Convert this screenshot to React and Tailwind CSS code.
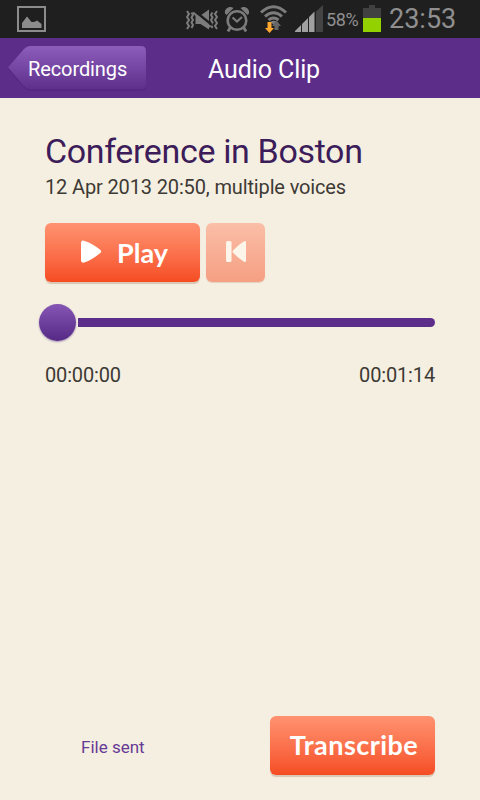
import React from 'react';

const PictureIcon = () => (
    <svg className="w-[29px] h-[26px]" viewBox="0 0 29 26" fill="none">
        <rect x="1" y="1" width="27" height="24" stroke="#8c8c8c" strokeWidth="2" />
        <path d="M5 22v-5l5-6.500 4.500 5.500q3 .5 5.500-1.500l4.500 3.500v4z" fill="#8c8c8c" />
    </svg>
);

const VibrateMuteIcon = () => (
    <svg className="w-8 h-6" viewBox="0 0 32 24" fill="none">
        <path d="M1 3l2 3-2 3 2 3-2 3 2 3-2 3M5.500 4.500l1.500 2.500-1.500 2.500L7 12l-1.500 2.500L7 17l-1.500 3M31 3l-2 3 2 3-2 3 2 3-2 3 2 3M26.500 4.500L25 7l1.500 2.500L25 12l1.500 2.500L25 17l1.500 3" stroke="#7c7c7c" strokeWidth="2" />
        <path d="M9.500 7.500h5l8.500-6v20L14.500 16h-5z" fill="#7c7c7c" />
        <path d="M8 2.500L26 17" stroke="#1f1f1f" strokeWidth="2.500" />
        <path d="M7 4.500l17.500 14.500" stroke="#7c7c7c" strokeWidth="2.200" />
    </svg>
);

const AlarmIcon = () => (
    <svg className="w-[26px] h-[26px]" viewBox="0 0 26 26" fill="none" stroke="#7c7c7c">
        <circle cx="13" cy="14.500" r="9.300" strokeWidth="2.600" />
        <path d="M8.500 11.500l4.500 4 5-4.500" strokeWidth="2.200" />
        <path d="M6.500 21l-2.500 4.500M19.500 21l2.500 4.500" strokeWidth="2.800" />
        <path d="M1 7.500C0 3 5-1 9.500 2L2.500 9zM25 7.500c1-4.500-4-8.500-8.500-5.500L23.500 9z" fill="#7c7c7c" stroke="none" />
    </svg>
);

const WifiIcon = () => (
    <svg className="w-[27px] h-7" viewBox="0 0 27 28" fill="none">
        <path d="M1 7.500Q13.500-4 26 7.500M5 11.500q8.500-7.500 17 0M8.500 15q5-4 10 0" stroke="#7c7c7c" strokeWidth="3" />
        <path d="M10.500 16.800q3-2 6 0l-3 3z" fill="#7c7c7c" />
        <path d="M7.500 17h4v6H14l-4.500 5L5 23h2.500z" fill="#ffa832" />
        <path d="M14.500 25h4v-4h2.500l-4.500-5.500L12 21h2.500z" fill="#666" />
    </svg>
);

const SignalIcon = () => (
    <svg className="w-7 h-[27px]" viewBox="0 0 28 27">
        <path d="M0 27v-1l6-6v7zM7 27v-8l6-6v14zM14 27V12l5.500-5.500V27z" fill="#a0a0a0" />
        <path d="M21 27V6.500L28 0v27z" fill="#444" />
    </svg>
);

const BatteryIcon = () => (
    <svg className="w-[18px] h-[27px]" viewBox="0 0 18 27">
        <path d="M0 3h6V0h6v3h6v10H0z" fill="#414141" />
        <path d="M0 13h18v14H0z" fill="#94d100" />
    </svg>
);

const StatusBar = () => (
    <div className="h-[38px] bg-[#1f1f1f] flex items-start text-[#8f8f8f]">
        <div className="ml-[17px] mt-1.5"><PictureIcon /></div>
        <div className="ml-[140px] mt-2"><VibrateMuteIcon /></div>
        <div className="ml-1.5 mt-1.5"><AlarmIcon /></div>
        <div className="ml-[10px] mt-[5px]"><WifiIcon /></div>
        <div className="ml-2 mt-[5px]"><SignalIcon /></div>
        <span className="w-[33px] ml-[3px] mt-2 text-[18px] leading-6 tracking-[-0.35px] whitespace-nowrap">58%</span>
        <div className="ml-1 mt-[5px]"><BatteryIcon /></div>
        <span className="ml-2 mt-[3px] text-[27px] leading-8 whitespace-nowrap">23:53</span>
    </div>
);

const Header = () => (
    <header className="h-[60px] bg-[#5c2d89] flex items-start text-white">
        <button className="relative w-[138px] h-[46px] ml-2 mt-2">
            <svg className="absolute inset-0 w-full h-full" viewBox="0 0 138 46">
                <defs>
                    <linearGradient id="back" x1="0" y1="0" x2="0" y2="1">
                        <stop offset="0" stopColor="#8c5dba" />
                        <stop offset="1" stopColor="#5e308c" />
                    </linearGradient>
                </defs>
                <path d="M0 22.500L16 4Q19 1 22 1h111q5 0 5 5v33.500q0 5-5 5H22q-3 0-6-3z" fill="#47206e" opacity=".6" />
                <path d="M0 21.500L16 3Q19 0 22 0h111q5 0 5 5v33.500q0 5-5 5H22q-3 0-6-3z" fill="url(#back)" />
            </svg>
            <span className="relative block pl-5 text-left text-[20px] leading-[46px] tracking-[-0.1px]">Recordings</span>
        </button>
        <h1 className="ml-[62px] mt-px text-[25px] leading-[62px] tracking-[-0.1px] whitespace-nowrap">Audio Clip</h1>
    </header>
);

const orange = 'bg-linear-to-b from-[#ff9270] to-[#f54c21] text-white rounded-[6px] shadow-[0_2px_1px_#d9c6b4]';

export default function App() {
    return (
        <div className="w-[480px] h-[800px] flex flex-col overflow-hidden bg-[#f5efe1] font-['Roboto',sans-serif]">
            <StatusBar />
            <Header />

            <main className="flex-1 flex flex-col px-[45px] text-[#3d3a35]">
                <h2 className="mt-[33px] text-[34px] leading-10 tracking-[-0.35px] text-[#3c1d5a] whitespace-nowrap">Conference in Boston</h2>
                <p className="mt-1 text-[20px] leading-6 tracking-[-0.14px] whitespace-nowrap">12 Apr 2013 20:50, multiple voices</p>

                {/* Playback buttons */}
                <div className="mt-6 flex gap-1.5">
                    <button className={`w-[155px] h-[59px] flex items-center pl-9 ${orange}`}>
                        <svg className="w-[21px] h-6 -mt-0.5" viewBox="0 0 21 24" fill="currentColor">
                            <path d="M0 3Q0 0 3 .7 11 3 19.500 10q1.500 1.500 0 2.800Q11 20 3 22.600q-3 .5-3-2z" />
                        </svg>
                        <span className="ml-[15px] mt-0.5 font-['Lato'] font-bold text-[27px]">Play</span>
                    </button>
                    <button className="w-[59px] h-[59px] flex items-center justify-center rounded-[6px] bg-linear-to-b from-[#fbbea7] to-[#f59f83] text-[#fdf5ea] shadow-[0_1px_1px_#e5d2c2]">
                        <svg className="w-5 h-[21px] -mt-0.5" viewBox="0 0 20 21" fill="currentColor">
                            <rect width="5.500" height="21" rx="1.500" />
                            <path d="M20 1.500v18q0 2-2 1.200Q12 17 7 11.500q-.8-1 0-2Q12 4 18 .3q2-.8 2 1.200z" />
                        </svg>
                    </button>
                </div>

                {/* Seek bar */}
                <div className="mt-[22px] -ml-1.5 h-[37px] flex items-center">
                    <div className="w-[37px] h-[37px] shrink-0 rounded-full bg-linear-to-b from-[#8656b4] to-[#572986] shadow-[0_1px_2px_#a491b5]" />
                    <div className="ml-0.5 flex-1 h-[9px] rounded-r-full bg-[#5c2d89]" />
                </div>
                <div className="mt-[22px] flex justify-between text-[20px] leading-6 tracking-[-0.15px]">
                    <span>00:00:00</span>
                    <span>00:01:14</span>
                </div>

                {/* Transcription */}
                <div className="mt-auto mb-[25px] flex items-center justify-between">
                    <span className="ml-9 mt-1 text-[17px] text-[#673a94]">File sent</span>
                    <button className={`w-[165px] h-[59px] pl-[3px] font-['Lato'] font-bold text-[27px] tracking-[0.45px] ${orange}`}>Transcribe</button>
                </div>
            </main>
        </div>
    );
}
